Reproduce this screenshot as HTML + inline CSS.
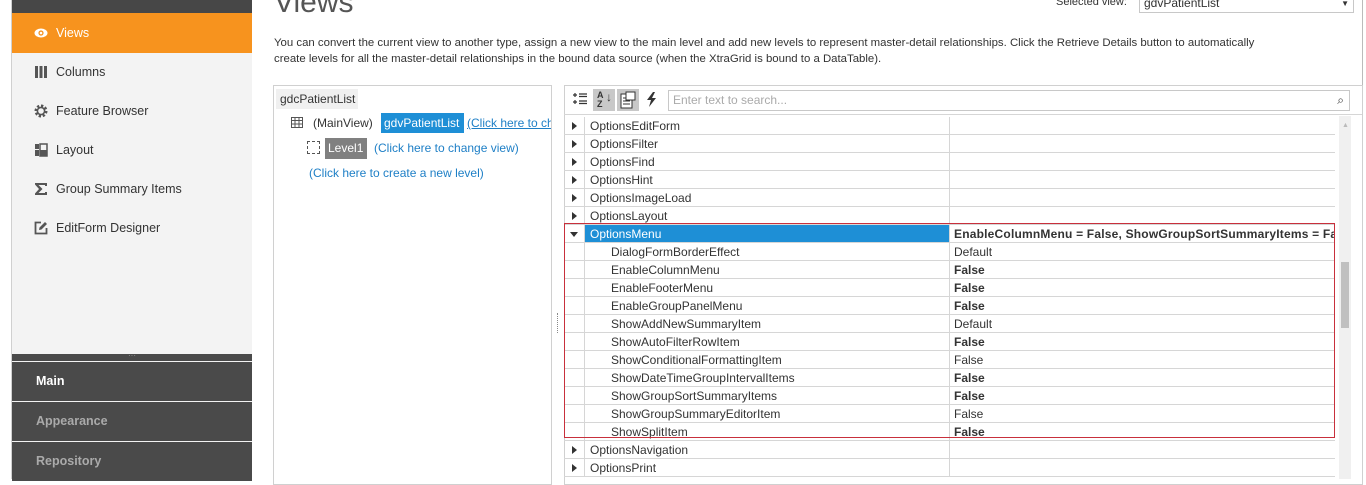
<!DOCTYPE html>
<html><head><style>
*{box-sizing:border-box;margin:0;padding:0}
body{width:1366px;height:479px;overflow:hidden;background:#fff;font-family:"Liberation Sans",sans-serif;font-size:12px;color:#333;position:relative}
.abs{position:absolute}
.nav{left:12px;width:240px;height:40px;display:flex;align-items:center;padding-left:22px;font-size:12.5px;color:#333}
.nav .ic{width:14px;height:14px;margin-right:8px;display:inline-block}
.bot{left:12px;width:240px;height:39px;background:#4a4a4a;color:#aaa;font-weight:bold;font-size:12.5px;padding-left:24px;line-height:39px}
.row{position:absolute;left:564px;width:771px;height:18px;border-bottom:1px solid #d6d6d6}
.row .n{position:absolute;left:26px;top:2px;font-size:12px;color:#333}
.row .v{position:absolute;left:390px;top:2px;font-size:12px;color:#333}
.row .arr{position:absolute;left:8px;top:5px;width:0;height:0;border-top:4px solid transparent;border-bottom:4px solid transparent;border-left:5px solid #333}
.row .c1{position:absolute;left:20px;top:0;bottom:-1px;border-left:1px solid #d6d6d6}
.row .c2{position:absolute;left:385px;top:0;bottom:-1px;border-left:1px solid #d6d6d6}
.ch .n{left:47px}
b{font-weight:bold}
</style></head><body>
<div class="abs" style="left:0;top:0;width:12px;height:479px;background:#fff;border-right:1px solid #d0d0d0"></div>
<div class="abs" style="left:12px;top:0;width:240px;height:479px;background:#f3f3f3"></div>
<div class="abs" style="left:12px;top:0;width:240px;height:13px;background:#474747"></div>
<div class="abs nav" style="top:13px;background:#f7931e;color:#fff"><svg class="ic" viewBox="0 0 14 14"><ellipse cx="7" cy="7" rx="6.5" ry="4.5" fill="#fff"/><circle cx="7" cy="7" r="2.6" fill="#f7931e"/><circle cx="7" cy="7" r="1.3" fill="#fff"/></svg>Views</div>
<div class="abs nav" style="top:52px"><svg class="ic" viewBox="0 0 14 14"><rect x="1" y="1" width="3" height="12" fill="#555"/><rect x="5.5" y="1" width="3" height="12" fill="#555"/><rect x="10" y="1" width="3" height="12" fill="#555"/></svg>Columns</div>
<div class="abs nav" style="top:91px"><svg class="ic" viewBox="0 0 14 14"><circle cx="7" cy="7" r="5" fill="none" stroke="#555" stroke-width="3" stroke-dasharray="2.2 1.7"/><circle cx="7" cy="7" r="3.6" fill="none" stroke="#555" stroke-width="1.6"/></svg>Feature Browser</div>
<div class="abs nav" style="top:130px"><svg class="ic" viewBox="0 0 14 14"><rect x="1" y="1" width="4" height="5" fill="#555"/><rect x="1" y="7" width="4" height="6" fill="#555"/><rect x="6" y="1" width="7" height="12" fill="none" stroke="#555" stroke-width="1.5"/><rect x="6" y="7" width="7" height="6" fill="#555"/></svg>Layout</div>
<div class="abs nav" style="top:169px"><svg class="ic" viewBox="0 0 14 14"><path d="M1 1H13V4H11V3H4.5L8.5 7L4.5 11H11V10H13V13H1V11.5L5 7L1 2.5Z" fill="#555"/></svg>Group Summary Items</div>
<div class="abs nav" style="top:208px"><svg class="ic" viewBox="0 0 14 14"><path d="M7 1.5H1.5V12.5H12.5V7" fill="none" stroke="#555" stroke-width="1.8"/><path d="M5 9L5.5 6.5L11 1L13 3L7.5 8.5Z" fill="#555"/></svg>EditForm Designer</div>
<div class="abs" style="left:12px;top:354px;width:240px;height:7px;background:#4a4a4a;color:#999;font-size:8px;text-align:center;line-height:4px">···</div>
<div class="abs bot" style="top:362px;color:#fff">Main</div>
<div class="abs bot" style="top:402px">Appearance</div>
<div class="abs bot" style="top:442px">Repository</div>
<div class="abs" style="left:274px;top:-14px;font-size:30px;color:#555;font-weight:300">Views</div>
<div class="abs" style="left:1056px;top:-4px;font-size:11px;color:#333">Selected view:</div>
<div class="abs" style="left:1139px;top:-6px;width:215px;height:19px;border:1px solid #c8c8c8;padding-left:4px;font-size:12px;line-height:17px">gdvPatientList<span style="position:absolute;right:4px;top:0;font-size:8px">▼</span></div>
<div class="abs" style="left:1362px;top:0;width:1px;height:479px;background:#bbb"></div>
<div class="abs" style="left:274px;top:36px;width:1080px;font-size:11.4px;line-height:15.5px;color:#333;white-space:nowrap">You can convert the current view to another type, assign a new view to the main level and add new levels to represent master-detail relationships. Click the Retrieve Details button to automatically<br>create levels for all the master-detail relationships in the bound data source (when the XtraGrid is bound to a DataTable).</div>
<div class="abs" style="left:273px;top:85px;width:279px;height:400px;border:1px solid #d0d0d0"></div>
<div class="abs" style="left:276px;top:89px;width:82px;height:20px;background:#f0f0f0;font-size:12px;line-height:20px;padding-left:4px">gdcPatientList</div>
<svg class="abs" style="left:291px;top:117px" width="12" height="11" viewBox="0 0 12 11"><rect x=".5" y=".5" width="11" height="10" fill="none" stroke="#555"/><path d="M.5 3.5H11.5M.5 7H11.5M4 .5V10.5M8 .5V10.5" stroke="#555"/></svg>
<div class="abs" style="left:313px;top:116px;font-size:12px">(MainView)</div>
<div class="abs" style="left:381px;top:113px;width:83px;height:20px;background:#1e8fd6;color:#fff;line-height:20px;padding-left:3px;font-size:12px">gdvPatientList</div>
<div class="abs" style="left:467px;top:116px;width:84px;overflow:hidden;white-space:nowrap;color:#1e7fc6;text-decoration:underline;font-size:12px">(Click here to change view)</div>
<div class="abs" style="left:307px;top:141px;width:13px;height:13px;border:1px dashed #555"></div>
<div class="abs" style="left:325px;top:138px;width:42px;height:21px;background:#808080;color:#fff;line-height:21px;padding-left:3px">Level1</div>
<div class="abs" style="left:374px;top:141px;color:#1e7fc6">(Click here to change view)</div>
<div class="abs" style="left:309px;top:166px;color:#1e7fc6">(Click here to create a new level)</div>
<div class="abs" style="left:557px;top:313px;height:20px;border-left:1px dotted #888"></div>
<div class="abs" style="left:564px;top:85px;width:799px;height:400px;border:1px solid #d0d0d0"></div>
<div class="abs" style="left:564px;top:114px;width:798px;height:1px;background:#d6d6d6"></div>
<svg class="abs" style="left:572px;top:91px" width="16" height="16" viewBox="0 0 16 16"><path d="M1 4H5M3 2V6M1 11H5M3 9V13M7 3H15M7 5.5H15M7 10H15M7 12.5H15" stroke="#333" stroke-width="1.2"/></svg>
<div class="abs" style="left:593px;top:89px;width:22px;height:22px;background:#c8c8c8;font-size:9px;font-weight:bold;line-height:9px;padding:2px 0 0 4px">A<br>Z<span style="position:absolute;left:13px;top:4px;font-size:12px">↓</span></div>
<div class="abs" style="left:617px;top:89px;width:22px;height:22px;background:#c8c8c8"><svg width="22" height="22" viewBox="0 0 22 22"><rect x="4" y="5" width="11" height="14" fill="#fff" stroke="#333"/><path d="M6 9H13M6 12H13M6 15H13" stroke="#333"/><rect x="9" y="3" width="9" height="8" fill="#fff" stroke="#333"/></svg></div>
<svg class="abs" style="left:645px;top:91px" width="14" height="17" viewBox="0 0 14 17"><path d="M8 1L2 9H6L4 16L11 7H7L10 1Z" fill="#333"/></svg>
<div class="abs" style="left:668px;top:90px;width:682px;height:21px;border:1px solid #c8c8c8;color:#aaa;line-height:19px;padding-left:4px;font-size:12px">Enter text to search...<span style="position:absolute;right:5px;top:0;color:#333">⌕</span></div>
<div class="abs" style="left:1339px;top:116px;width:12px;height:363px;background:#f0f0f0"></div>
<div class="abs" style="left:1341px;top:262px;width:8px;height:66px;background:#c0c0c0"></div>
<div class="abs" style="left:1342px;top:122px;font-size:7px;color:#bbb">▲</div>

<div class="row" style="top:117px"><i class="arr"></i><i class="c1"></i><i class="c2"></i><span class="n">OptionsEditForm</span></div>
<div class="row" style="top:135px"><i class="arr"></i><i class="c1"></i><i class="c2"></i><span class="n">OptionsFilter</span></div>
<div class="row" style="top:153px"><i class="arr"></i><i class="c1"></i><i class="c2"></i><span class="n">OptionsFind</span></div>
<div class="row" style="top:171px"><i class="arr"></i><i class="c1"></i><i class="c2"></i><span class="n">OptionsHint</span></div>
<div class="row" style="top:189px"><i class="arr"></i><i class="c1"></i><i class="c2"></i><span class="n">OptionsImageLoad</span></div>
<div class="row" style="top:207px"><i class="arr"></i><i class="c1"></i><i class="c2"></i><span class="n">OptionsLayout</span></div>
<div class="row" style="top:225px"><i style="position:absolute;left:6px;top:7px;border-left:4px solid transparent;border-right:4px solid transparent;border-top:5px solid #333"></i><div style="position:absolute;left:21px;top:0;width:364px;height:17px;background:#1e8fd6"></div><i class="c1"></i><i class="c2"></i><span class="n" style="color:#fff">OptionsMenu</span><span class="v" style="font-weight:bold;white-space:nowrap;width:380px;overflow:hidden;letter-spacing:.2px">EnableColumnMenu = False, ShowGroupSortSummaryItems = False</span></div>
<div class="row ch" style="top:243px"><i class="c1"></i><i class="c2"></i><span class="n">DialogFormBorderEffect</span><span class="v">Default</span></div>
<div class="row ch" style="top:261px"><i class="c1"></i><i class="c2"></i><span class="n">EnableColumnMenu</span><span class="v"><b>False</b></span></div>
<div class="row ch" style="top:279px"><i class="c1"></i><i class="c2"></i><span class="n">EnableFooterMenu</span><span class="v"><b>False</b></span></div>
<div class="row ch" style="top:297px"><i class="c1"></i><i class="c2"></i><span class="n">EnableGroupPanelMenu</span><span class="v"><b>False</b></span></div>
<div class="row ch" style="top:315px"><i class="c1"></i><i class="c2"></i><span class="n">ShowAddNewSummaryItem</span><span class="v">Default</span></div>
<div class="row ch" style="top:333px"><i class="c1"></i><i class="c2"></i><span class="n">ShowAutoFilterRowItem</span><span class="v"><b>False</b></span></div>
<div class="row ch" style="top:351px"><i class="c1"></i><i class="c2"></i><span class="n">ShowConditionalFormattingItem</span><span class="v">False</span></div>
<div class="row ch" style="top:369px"><i class="c1"></i><i class="c2"></i><span class="n">ShowDateTimeGroupIntervalItems</span><span class="v"><b>False</b></span></div>
<div class="row ch" style="top:387px"><i class="c1"></i><i class="c2"></i><span class="n">ShowGroupSortSummaryItems</span><span class="v"><b>False</b></span></div>
<div class="row ch" style="top:405px"><i class="c1"></i><i class="c2"></i><span class="n">ShowGroupSummaryEditorItem</span><span class="v">False</span></div>
<div class="row ch" style="top:423px"><i class="c1"></i><i class="c2"></i><span class="n">ShowSplitItem</span><span class="v"><b>False</b></span></div>
<div class="row" style="top:441px"><i class="arr"></i><i class="c1"></i><i class="c2"></i><span class="n">OptionsNavigation</span></div>
<div class="row" style="top:459px"><i class="arr"></i><i class="c1"></i><i class="c2"></i><span class="n">OptionsPrint</span></div>
<div class="abs" style="left:564px;top:223px;width:771px;height:215px;border:1px solid #c8303c"></div>
</body></html>
